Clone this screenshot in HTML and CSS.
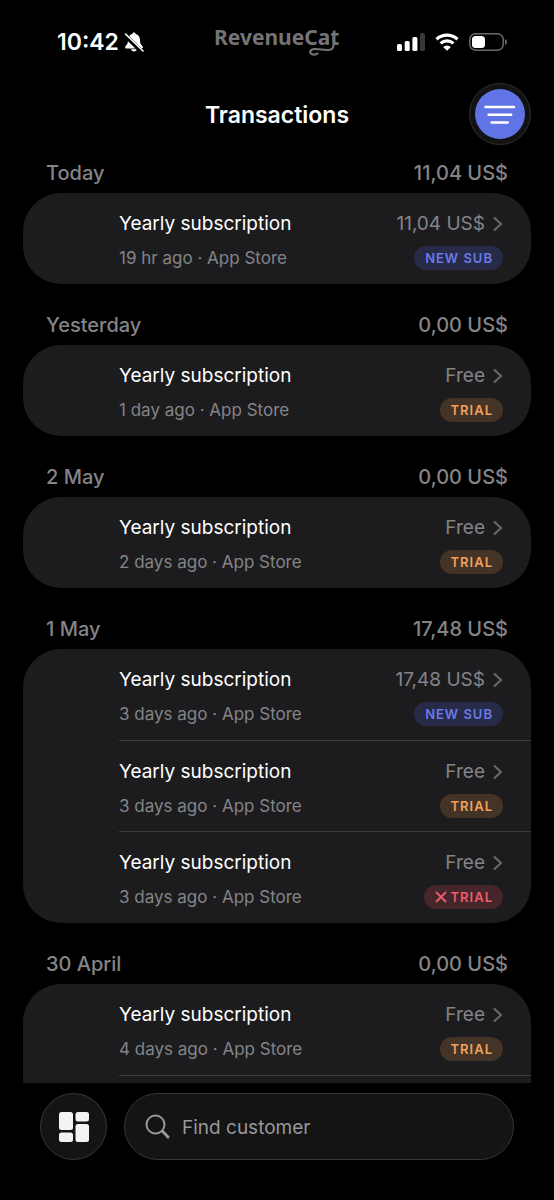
FILE: index.html
```html
<!DOCTYPE html>
<html lang="en">
<head>
<meta charset="utf-8">
<meta name="viewport" content="width=device-width, initial-scale=1">
<title>Transactions</title>
<link rel="stylesheet" href="styles.css">
</head>
<body>
<svg class="sprite" aria-hidden="true">
  <symbol id="chevron" viewBox="0 0 10 16"><path d="M1.500 2 8 8l-6.500 6" fill="none" stroke="currentColor" stroke-width="2" stroke-linecap="round" stroke-linejoin="round"/></symbol>
</svg>
<div class="screen">
  <div class="status">
    <div class="clock">
      <span>10:42</span>
      <svg width="20" height="20" viewBox="0 0 20 20" aria-hidden="true">
        <path d="M10 .5c-.9 0-1.600.6-1.700 1.400C5.500 2.700 4 5 4 7.800c0 3.400-.7 4.400-1.900 5.700-.7.800-1 1.200-1 1.800 0 .8.6 1.200 1.400 1.200h15c.8 0 1.400-.4 1.400-1.200 0-.6-.3-1-1-1.800-1.200-1.300-1.900-2.300-1.900-5.700 0-2.800-1.500-5.100-4.300-5.900C11.600 1.100 10.900.5 10 .5zM7 17.300c.3 1.300 1.500 2.200 3 2.200s2.700-.9 3-2.200z" fill="#fff"/>
        <path d="M.5 2.500 17.500 19.500" stroke="#000" stroke-width="4.500"/>
        <path d="M1.500 2 19 19" stroke="#fff" stroke-width="1.600" stroke-linecap="round"/>
      </svg>
    </div>
    <svg class="logo" width="132" height="46" viewBox="-2 -6 132 46" role="img" aria-label="RevenueCat">
      <text x="1" y="20">RevenueCat</text>
      <path d="M120.500 18.500v1.500c0 4-2.500 5.200-6.500 5-4.500-.2-8-1-12-1-5.500 0-6.500 4.900-2 5.500 2 .2 3.500-.2 4.500-1" fill="none" stroke="#747476" stroke-width="2.200" stroke-linecap="round"/>
    </svg>
    <div class="signals">
      <svg width="28" height="18" viewBox="0 0 28 18" aria-hidden="true">
        <rect x="0" y="11" width="5" height="7" rx="1.500" fill="#fff"/><rect x="7.700" y="8" width="5" height="10" rx="1.500" fill="#fff"/><rect x="15.400" y="4" width="5" height="14" rx="1.500" fill="#fff"/><rect x="23" y="0" width="5" height="18" rx="1.500" fill="#38383a"/>
      </svg>
      <svg width="24" height="18" viewBox="0 0 24 18" aria-hidden="true">
        <path d="M1.500 6.200a15.500 15.500 0 0 1 21 0M5.600 10.400a9.600 9.600 0 0 1 12.800 0" fill="none" stroke="#fff" stroke-width="3.200"/>
        <path d="M12 17.800 8.200 14a5.500 5.500 0 0 1 7.600 0z" fill="#fff"/>
      </svg>
      <svg width="39" height="18" viewBox="0 0 39 18" aria-hidden="true">
        <rect x=".8" y=".8" width="33.400" height="16.400" rx="5.500" fill="none" stroke="#6a6a6c" stroke-width="1.500"/>
        <rect x="3" y="3" width="13" height="12" rx="3.500" fill="#fff"/>
        <path d="M36 6c2.600 1 2.600 5 0 6z" fill="#6a6a6c"/>
      </svg>
    </div>
  </div>

  <header class="header">
    <h1>Transactions</h1>
    <button class="filter" type="button" aria-label="Filter">
      <svg width="50" height="50" viewBox="0 0 50 50" aria-hidden="true"><circle cx="25" cy="25" r="25" fill="#6174e6"/><path d="M10.500 18h28.500M13.700 25.700h22.400M16.700 33.500h16" stroke="#fff" stroke-width="2.600" stroke-linecap="round"/></svg>
    </button>
  </header>

  <main class="list">
    <section>
      <div class="day"><h2>Today</h2><span>11,04 US$</span></div>
      <div class="card">
        <a class="row" href="#"><span class="title">Yearly subscription</span><span class="price">11,04 US$<svg><use href="#chevron"/></svg></span><span class="meta">19 hr ago · App Store</span><span class="badge new">NEW SUB</span></a>
      </div>
    </section>
    <section>
      <div class="day"><h2>Yesterday</h2><span>0,00 US$</span></div>
      <div class="card">
        <a class="row" href="#"><span class="title">Yearly subscription</span><span class="price">Free<svg><use href="#chevron"/></svg></span><span class="meta">1 day ago · App Store</span><span class="badge trial">TRIAL</span></a>
      </div>
    </section>
    <section>
      <div class="day"><h2>2 May</h2><span>0,00 US$</span></div>
      <div class="card">
        <a class="row" href="#"><span class="title">Yearly subscription</span><span class="price">Free<svg><use href="#chevron"/></svg></span><span class="meta">2 days ago · App Store</span><span class="badge trial">TRIAL</span></a>
      </div>
    </section>
    <section>
      <div class="day"><h2>1 May</h2><span>17,48 US$</span></div>
      <div class="card">
        <a class="row" href="#"><span class="title">Yearly subscription</span><span class="price">17,48 US$<svg><use href="#chevron"/></svg></span><span class="meta">3 days ago · App Store</span><span class="badge new">NEW SUB</span></a>
        <a class="row" href="#"><span class="title">Yearly subscription</span><span class="price">Free<svg><use href="#chevron"/></svg></span><span class="meta">3 days ago · App Store</span><span class="badge trial">TRIAL</span></a>
        <a class="row" href="#"><span class="title">Yearly subscription</span><span class="price">Free<svg><use href="#chevron"/></svg></span><span class="meta">3 days ago · App Store</span><span class="badge cancelled"><svg width="12" height="12" viewBox="0 0 12 12" aria-hidden="true"><path d="m1.500 1.500 9 9m0-9-9 9" stroke="currentColor" stroke-width="1.800" stroke-linecap="round"/></svg>TRIAL</span></a>
      </div>
    </section>
    <section>
      <div class="day"><h2>30 April</h2><span>0,00 US$</span></div>
      <div class="card">
        <a class="row" href="#"><span class="title">Yearly subscription</span><span class="price">Free<svg><use href="#chevron"/></svg></span><span class="meta">4 days ago · App Store</span><span class="badge trial">TRIAL</span></a>
        <a class="row" href="#" aria-label="More transactions"></a>
      </div>
    </section>
  </main>

  <footer class="dock">
    <button class="overview" type="button" aria-label="Overview">
      <svg width="32" height="32" viewBox="0 0 32 32" fill="#f3f3f4" aria-hidden="true"><rect x="1" y="1" width="14" height="18" rx="2.500"/><rect x="1" y="21.500" width="14" height="9.500" rx="2.500"/><rect x="17.500" y="1" width="13.500" height="9.500" rx="2.500"/><rect x="17.500" y="13" width="13.500" height="18" rx="2.500"/></svg>
    </button>
    <label class="search">
      <svg width="26" height="26" viewBox="0 0 26 26" aria-hidden="true"><circle cx="10.500" cy="10.500" r="9" fill="none" stroke="#98989b" stroke-width="2"/><path d="m17.500 17.300 5.500 5.700" stroke="#98989b" stroke-width="3" stroke-linecap="round"/></svg>
      <input type="search" placeholder="Find customer" aria-label="Find customer">
    </label>
  </footer>
</div>
</body>
</html>
```
FILE: styles.css
```css
* { box-sizing: border-box; }
body { margin: 0; background: #000; color: #fff; font-family: Inter, "Liberation Sans", sans-serif; }
button { padding: 0; font: inherit; cursor: pointer; }
.sprite { display: none; }
.screen { height: 100vh; display: flex; flex-direction: column; }

.status { display: grid; grid-template-columns: 1fr auto 1fr; align-items: center; height: 83px; flex: none; padding: 0 46px; }
.clock { display: flex; align-items: center; gap: 5px; padding-left: 11px; font-size: 23px; font-weight: 600; }
.logo text { font: 700 21px "Noto Sans", sans-serif; fill: #747476; }
.signals { display: flex; align-items: center; justify-content: flex-end; gap: 10px; }

.header { display: grid; grid-template-columns: 62px 1fr 62px; align-items: center; flex: none; padding: 0 23px; }
.header h1 { grid-column: 2; margin: 0; padding-top: 2px; text-align: center; font-size: 23px; line-height: 30px; font-weight: 600; }
.filter { display: grid; place-items: center; width: 62px; height: 62px; border: 1px solid #303030; border-radius: 50%; background: #121212; }

.list { flex: 1; min-height: 0; overflow: hidden; padding: 0 23px; margin-top: 16px; }
.list section + section { padding-top: 29px; }
.day { display: flex; justify-content: space-between; padding: 0 23px 8px; color: #848488; font-size: 20px; line-height: 24px; font-weight: 500; }
.day h2 { margin: 0; font: inherit; }
.card { overflow: hidden; border-radius: 38px; background: #1c1c1e; }
.row { display: grid; grid-template-columns: 1fr auto; row-gap: 9px; align-items: center; min-height: 91px; margin-left: 96px; padding: 17px 28px 15px 0; color: #fff; text-decoration: none; }
.row + .row { border-top: 1px solid #3b3b3d; }
.row + .row:not(:last-child) { padding-bottom: 14px; }
.title { font-size: 19px; line-height: 28px; }
.price { display: flex; align-items: center; justify-content: flex-end; gap: 8px; color: #848488; font-size: 19px; line-height: 28px; }
.price svg { width: 10px; height: 16px; color: #6a6a6e; }
.meta { color: #848488; font-size: 17px; line-height: 22px; }
.badge { display: flex; align-items: center; justify-self: end; gap: 4px; height: 24px; margin: -1px 0; padding: 0 10px 0 11px; border-radius: 12px; font-size: 13px; font-weight: 600; letter-spacing: 1px; }
.new { color: #6b79ea; background: #282b47; }
.trial { color: #f0a15c; background: #443427; }
.cancelled { color: #ee5d6c; background: #45262b; }

.dock { display: flex; gap: 17px; flex: none; padding: 10px 40px 40px; }
.overview { display: grid; place-items: center; flex: none; width: 67px; height: 67px; border: 1px solid #363637; border-radius: 50%; background: #141414; }
.search { display: flex; align-items: center; gap: 11px; flex: 1; min-width: 0; height: 67px; padding: 0 20px; border: 1px solid #363637; border-radius: 34px; background: #141414; }
.search svg { flex: none; }
.search input { flex: 1; min-width: 0; border: 0; padding: 2px 0 0; outline: 0; background: none; color: #fff; font: 19px Inter, sans-serif; }
.search input::placeholder { color: #98989b; opacity: 1; }
```
